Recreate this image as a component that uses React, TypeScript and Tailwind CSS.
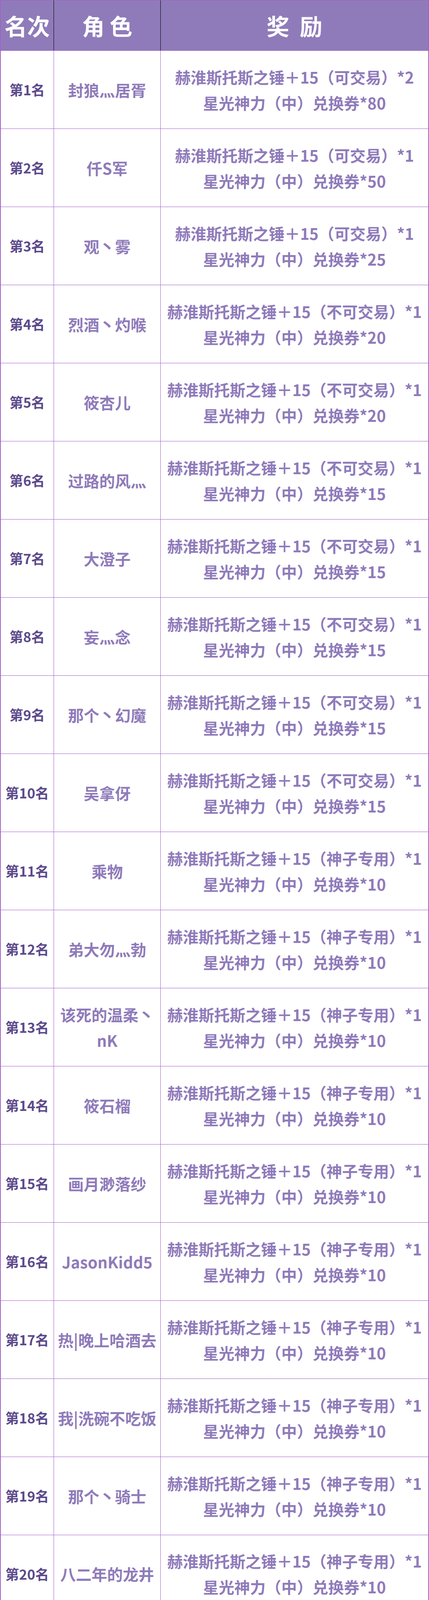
const rows: { name: string; tag: string; qty: string; coupon: string }[] = [
  { name: "封狼灬居胥", tag: "可交易", qty: "2", coupon: "80" },
  { name: "仟S军", tag: "可交易", qty: "1", coupon: "50" },
  { name: "观丶雾", tag: "可交易", qty: "1", coupon: "25" },
  { name: "烈酒丶灼喉", tag: "不可交易", qty: "1", coupon: "20" },
  { name: "筱杏儿", tag: "不可交易", qty: "1", coupon: "20" },
  { name: "过路的风灬", tag: "不可交易", qty: "1", coupon: "15" },
  { name: "大澄子", tag: "不可交易", qty: "1", coupon: "15" },
  { name: "妄灬念", tag: "不可交易", qty: "1", coupon: "15" },
  { name: "那个丶幻魔", tag: "不可交易", qty: "1", coupon: "15" },
  { name: "吴拿伢", tag: "不可交易", qty: "1", coupon: "15" },
  { name: "乘物", tag: "神子专用", qty: "1", coupon: "10" },
  { name: "弟大勿灬勃", tag: "神子专用", qty: "1", coupon: "10" },
  { name: "该死的温柔丶nK", tag: "神子专用", qty: "1", coupon: "10" },
  { name: "筱石榴", tag: "神子专用", qty: "1", coupon: "10" },
  { name: "画月渺落纱", tag: "神子专用", qty: "1", coupon: "10" },
  { name: "JasonKidd5", tag: "神子专用", qty: "1", coupon: "10" },
  { name: "热|晚上哈酒去", tag: "神子专用", qty: "1", coupon: "10" },
  { name: "我|洗碗不吃饭", tag: "神子专用", qty: "1", coupon: "10" },
  { name: "那个丶骑士", tag: "神子专用", qty: "1", coupon: "10" },
  { name: "八二年的龙井", tag: "神子专用", qty: "1", coupon: "10" },
];

export default function App() {
  return (
    <div className="w-[1097px] bg-white font-['Noto_Sans_CJK_SC','Noto_Sans',sans-serif] font-bold">
      <div className="border-x-2 border-t border-b-2 border-[#a35fc8]">
        {/* header */}
        <div className="grid grid-cols-[136px_273px_1fr] h-[129px] bg-[#8f7bba] border-b border-[#a35fc8] text-white text-[58px] leading-none">
          <div className="flex items-center justify-center border-r border-black">名次</div>
          <div className="flex items-center justify-center border-r border-black whitespace-pre">角 色</div>
          <div className="flex items-center justify-center whitespace-pre">奖  励</div>
        </div>

        {rows.map((r, i) => (
          <div
            key={i}
            className={
              "grid grid-cols-[136px_273px_1fr] " +
              (i < rows.length - 1 ? "h-[200px] border-b border-[#a35fc8]" : "h-[198px]")
            }
          >
            <div className="flex items-center justify-center border-r border-[#a35fc8] text-[35px] text-[#5c4a8b]">
              第{i + 1}名
            </div>
            <div className="flex items-center justify-center border-r border-[#a35fc8] px-0.5 text-center text-[40px] leading-[66px] text-[#8f7bba]">
              {r.name}
            </div>
            <div className="flex flex-col items-center justify-center text-center text-[40px] leading-[66px] text-[#8f7bba] whitespace-nowrap">
              <span>赫淮斯托斯之锤＋15（{r.tag}）*{r.qty}</span>
              <span>星光神力（中）兑换券*{r.coupon}</span>
            </div>
          </div>
        ))}
      </div>
    </div>
  );
}
